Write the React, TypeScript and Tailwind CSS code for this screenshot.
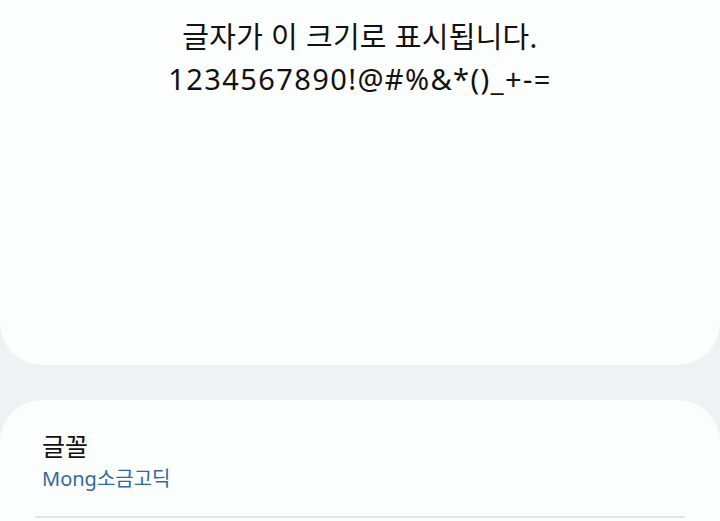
export default function App() {
  return (
    <div
      className="h-[521px] w-[720px] overflow-hidden bg-[#eef2f5]"
      style={{ fontFamily: '"Noto Sans", "Noto Sans CJK KR", sans-serif' }}
    >
      {/* Preview card */}
      <div className="h-[365px] rounded-b-[42px] bg-[#fcfdfd] pt-[16px] text-center text-[29px] leading-[42px] text-[#111]">
        <p className="tracking-[0.3px]">글자가 이 크기로 표시됩니다.</p>
        <p className="tracking-[1.4px]">1234567890!@#%&amp;*()_+-=</p>
      </div>

      {/* Settings card */}
      <div className="mt-[35px] h-[200px] rounded-t-[42px] bg-[#fcfdfd] px-[35px] pt-[28px]">
        <div className="px-[7px]">
          <p className="text-[25px] leading-[36px] text-[#111]">글꼴</p>
          <p className="text-[20px] leading-[30px] text-[#2f6b9c]">Mong소금고딕</p>
        </div>
        <div className="mt-[22px] h-[2px] bg-[#e3e6e8]" />
      </div>
    </div>
  );
}
